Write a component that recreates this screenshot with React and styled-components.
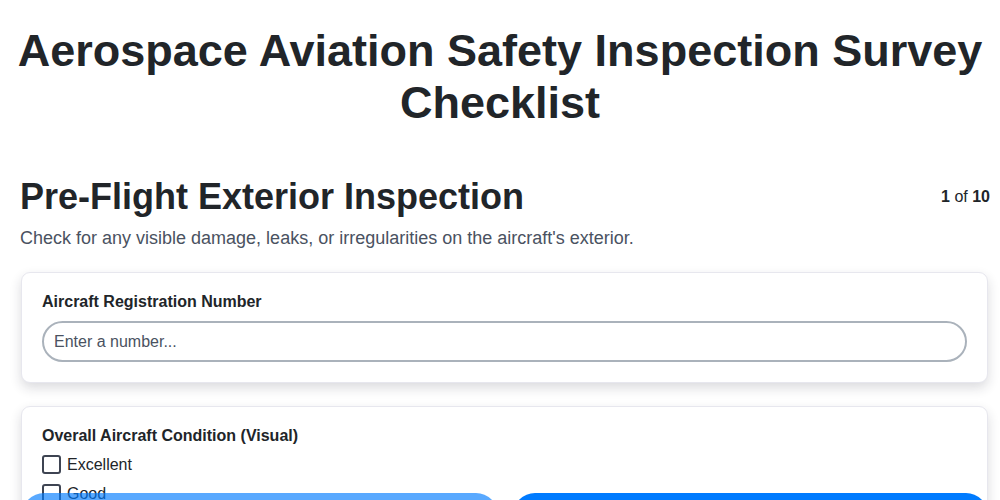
import styled, { createGlobalStyle } from "styled-components";

const GlobalStyle = createGlobalStyle`
    * {
        box-sizing: border-box;
    }

    body {
        margin: 0;
        background: #ffffff;
        color: #212529;
        font-family: "Liberation Sans", Arial, sans-serif;
    }
`;

const options = ["Excellent", "Good", "Fair", "Poor"];

const App = () => {
    return (
        <>
            <GlobalStyle />
            <Page>
                <Title>Aerospace Aviation Safety Inspection Survey Checklist</Title>
                <Header>
                    <SectionTitle>Pre-Flight Exterior Inspection</SectionTitle>
                    <Counter><strong>1</strong> of <strong>10</strong></Counter>
                </Header>
                <Description>
                    Check for any visible damage, leaks, or irregularities on the aircraft's exterior.
                </Description>

                <Card>
                    <Label htmlFor="reg">Aircraft Registration Number</Label>
                    <Input id="reg" type="text" placeholder="Enter a number..." />
                </Card>

                <Card>
                    <Label as="p" $tight>Overall Aircraft Condition (Visual)</Label>
                    {options.map((option) => (
                        <Option key={option}>
                            <Box type="checkbox" />
                            {option}
                        </Option>
                    ))}
                </Card>
            </Page>

            <Footer>
                <NavButton $muted disabled>Previous</NavButton>
                <NavButton>Next</NavButton>
            </Footer>
        </>
    );
};

const Page = styled.main`
    padding: 25px 12px 80px 21px;
`;

const Title = styled.h1`
    margin: 0 0 46px -9px;
    font-size: 45px;
    line-height: 52px;
    font-weight: 700;
    text-align: center;
    color: #212529;
`;

const Header = styled.div`
    display: flex;
    justify-content: space-between;
    align-items: center;
`;

const SectionTitle = styled.h2`
    margin: 0 0 0 -1px;
    font-size: 36px;
    line-height: 44px;
    font-weight: 700;
    color: #212529;
`;

const Counter = styled.span`
    margin-right: -2px;
    font-size: 16px;
    color: #212529;
`;

const Description = styled.p`
    margin: 7px 0 22px -1px;
    font-size: 18px;
    line-height: 24px;
    color: #4a5261;
`;

const Card = styled.section`
    display: flex;
    flex-direction: column;
    align-items: flex-start;
    background: #ffffff;
    border: 1px solid #e7e7ee;
    border-radius: 9px;
    box-shadow: 0 5px 12px rgba(30, 30, 50, 0.16);
    padding: 20px 20px 20px;
    margin-bottom: 23px;
`;

const Label = styled.label`
    display: block;
    margin: 0 0 ${(props) => (props.$tight ? "5px" : "10px")};
    font-size: 16px;
    line-height: 18px;
    font-weight: 700;
    color: #212529;
`;

const Input = styled.input`
    width: 100%;
    height: 41px;
    padding: 0 10px;
    border: 2px solid #aab2bb;
    border-radius: 21px;
    font-family: inherit;
    font-size: 16px;
    color: #212529;
    background: #ffffff;
    outline: none;

    &::placeholder {
        color: #4a5261;
    }
`;

const Option = styled.label`
    display: flex;
    align-items: center;
    gap: 6px;
    height: 29px;
    font-size: 16px;
    color: #212529;
`;

const Box = styled.input`
    appearance: none;
    width: 19px;
    height: 19px;
    margin: 0;
    border: 2px solid #3e4452;
    border-radius: 3px;
    background: #ffffff;
`;

const Footer = styled.nav`
    position: fixed;
    left: 0;
    right: 0;
    top: calc(100vh - 7px);
    display: grid;
    grid-template-columns: 1fr 1fr;
    gap: 15px;
    padding: 0 12px 0 22px;
`;

const NavButton = styled.button`
    height: 44px;
    border: none;
    border-radius: 22px;
    background: #007bff;
    color: #ffffff;
    font-family: inherit;
    font-size: 16px;
    font-weight: 700;
    opacity: ${(props) => (props.$muted ? 0.65 : 1)};
`;

export default App;
